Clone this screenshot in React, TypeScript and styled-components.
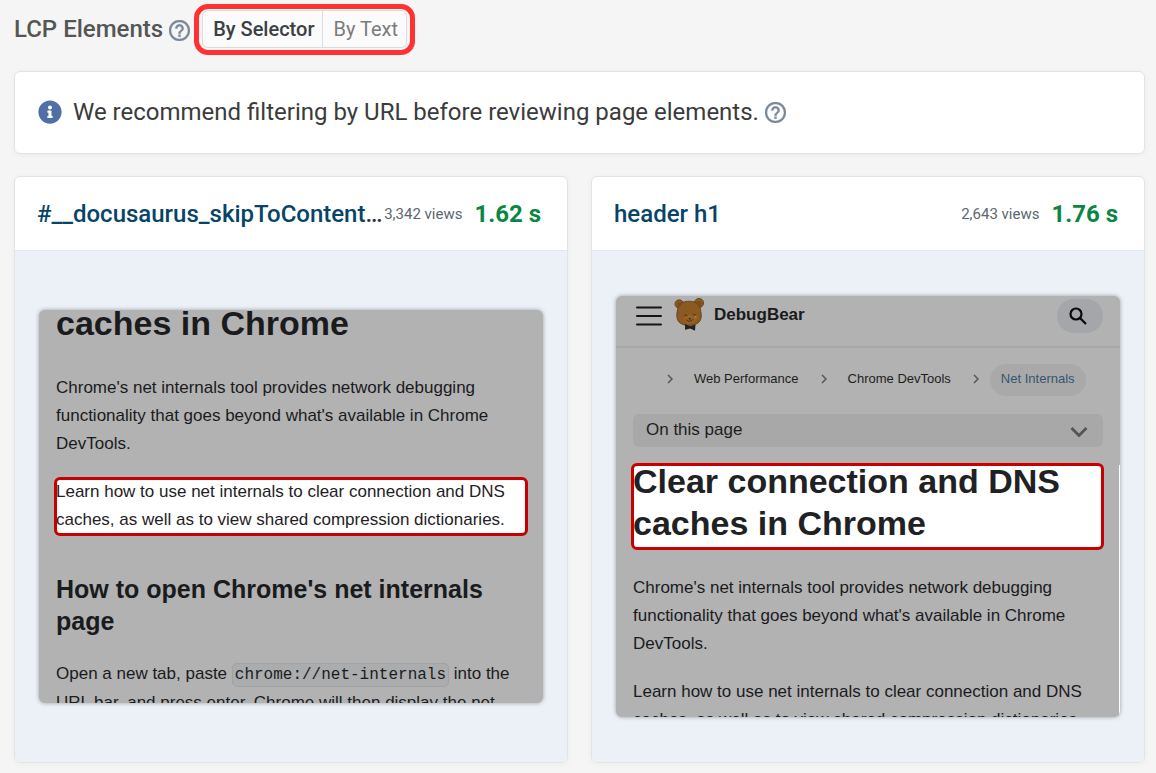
import React from "react";
import styled, { createGlobalStyle, css } from "styled-components";
import { FaInfoCircle } from "react-icons/fa";

const GlobalStyle = createGlobalStyle`
  *, *::before, *::after { box-sizing: border-box; }
  body {
    margin: 0;
    background: #f5f5f5;
    font-family: Roboto, "Liberation Sans", sans-serif;
    color: #3b3b3b;
  }
  h1, h2, h3, p { margin: 0; }
`;

const Page = styled.main`
  padding: 4px 11px 10px 14px;
`;

const TitleRow = styled.header`
  display: flex;
  align-items: center;
`;

const Title = styled.h1`
  padding-bottom: 2px;
  font-size: 24px;
  line-height: 32px;
  font-weight: 500;
  color: #555;
`;

const HelpButton = styled.button`
  display: flex;
  margin: 2px 0 0 6px;
  padding: 0;
  border: 0;
  background: none;
  color: #778899;
`;

const Callout = styled.div`
  margin-left: 4px;
  padding: 1px 3px 2px;
  border: 5px solid #ff3131;
  border-radius: 14px;
`;

const Toggle = styled.div`
  display: flex;
  height: 38px;
  border: 1px solid #dcdcdc;
  border-radius: 6px;
  background: #fbfbfb;
`;

const ToggleButton = styled.button<{ $active?: boolean }>`
  padding: 0 8px 0 10px;
  border: 0;
  background: none;
  font-family: inherit;
  font-size: 20px;
  font-weight: ${(p) => (p.$active ? 500 : 400)};
  color: ${(p) => (p.$active ? "#3b4045" : "#7b7b7b")};

  & + & {
    border-left: 1px solid #dcdcdc;
  }
`;

const panel = css`
  background: #fff;
  border: 1px solid #e2e3e4;
  border-radius: 6px;
  box-shadow: 0 1px 6px rgba(0, 0, 0, 0.04);
`;

const Banner = styled.section`
  ${panel}
  display: flex;
  align-items: center;
  margin-top: 16px;
  padding: 23px 23px 25px;
  font-size: 24px;
  line-height: 31px;

  & > svg {
    color: #4f6fa5;
    margin-right: 11px;
  }
  p {
    padding-top: 2px;
  }
`;

const Cards = styled.div`
  display: grid;
  grid-template-columns: 1fr 1fr;
  gap: 23px;
  margin-top: 22px;
`;

const Card = styled.article`
  ${panel}
  display: flex;
  flex-direction: column;
  min-width: 0;
  overflow: hidden;
`;

const CardHeader = styled.header`
  display: flex;
  align-items: center;
  height: 73px;
  padding: 0 26px 0 22px;
`;

const Selector = styled.h2`
  flex: 1;
  min-width: 0;
  white-space: nowrap;
  font-size: 24px;
  line-height: 32px;
  font-weight: 500;
  color: #333;

  a {
    color: #074468;
    text-decoration: none;
  }
`;

const Views = styled.span`
  font-size: 15px;
  color: #5b6770;
`;

const Timing = styled.strong`
  margin-left: 12px;
  font-size: 24px;
  font-weight: 700;
  color: #088742;
`;

const CardBody = styled.div`
  display: flex;
  align-items: center;
  flex: 1;
  min-height: 512px;
  padding: 44px 24px;
  border-top: 1px solid #e3e8ec;
  background: #ebf1f6;
`;

const Preview = styled.div<{ $height: number }>`
  flex: 1;
  min-width: 0;
  height: ${(p) => p.$height}px;
  overflow: hidden;
  border-radius: 6px;
  background: #b2b2b2;
  box-shadow: 0 0 4px rgba(0, 0, 0, 0.35);
  font-family: "Liberation Sans", Arial, sans-serif;
  color: #1a1b1d;
`;

const Doc = styled.div<{ $edge?: boolean; $scrolled?: boolean }>`
  display: flow-root;
  height: 100%;
  padding: 0 17px;
  ${(p) => p.$edge && "border-right: 1px solid #fff;"}
  ${(p) => p.$scrolled && "margin-top: -8px; height: auto;"}
`;

const DocTitle = styled.h1`
  margin-bottom: 30px;
  font-size: 34px;
  line-height: 42px;
`;

const DocHeading = styled.h2`
  margin: 39px 0 23px;
  font-size: 25px;
  line-height: 32px;
`;

const Paragraph = styled.p`
  margin-bottom: 20px;
  font-size: 17px;
  line-height: 28px;
`;

const Highlight = styled.div<{ $height: number }>`
  display: flow-root;
  height: ${(p) => p.$height}px;
  margin: 21px 0 26px;
  border-radius: 4px;
  outline: 3px solid #c80000;
  outline-offset: -1px;
  background: #fff;
  color: #1f2225;

  &:first-child {
    margin-top: 0;
  }
  ${DocTitle} {
    margin: -5px 0 0;
  }
  ${Paragraph} {
    margin: -1px 0 0;
  }
`;

const Code = styled.code`
  padding: 2px;
  border: 1px solid #a0a2a4;
  border-radius: 5px;
  background: #abacae;
  font-family: "Liberation Mono", monospace;
  font-size: 16px;
`;

const SiteBar = styled.div`
  display: flex;
  align-items: center;
  height: 52px;
  padding: 0 17px 10px 20px;
  border-bottom: 2px solid #a8a8a8;
`;

const IconButton = styled.button`
  display: flex;
  padding: 0;
  border: 0;
  background: none;
  color: #141517;
`;

const Brand = styled.a`
  display: flex;
  align-items: center;
  gap: 9px;
  margin: 0 0 3px 12px;
  color: #1a1b1d;
  font-size: 17px;
  font-weight: 700;
  text-decoration: none;
`;

const SearchButton = styled(IconButton)`
  align-items: center;
  justify-content: center;
  width: 46px;
  height: 34px;
  margin-left: auto;
  padding-right: 4px;
  border-radius: 17px;
  background: #a4a6aa;
`;

const Crumbs = styled.nav`
  display: flex;
  align-items: center;
  height: 32px;
  margin: 16px 0 18px 29px;
  font-size: 13px;
  line-height: 30px;
  white-space: nowrap;

  a {
    padding-bottom: 2px;
    color: #1d1e20;
    text-decoration: none;
  }
  svg {
    margin: 0 21px 2px 22px;
  }
  svg:last-of-type {
    margin-right: 11px;
  }
`;

const CurrentCrumb = styled.span`
  padding: 0 11px 2px;
  border-radius: 16px;
  background: #a9a9a9;
  color: #34566f;
`;

const Contents = styled.button`
  display: flex;
  align-items: center;
  justify-content: space-between;
  width: calc(100% - 34px);
  height: 33px;
  margin: 0 17px 18px;
  padding: 0 15px 1px 13px;
  border: 0;
  border-radius: 6px;
  background: #a8a8a8;
  color: #1d1e20;
  font-family: inherit;
  font-size: 17px;

  svg {
    margin-top: 3px;
  }
`;

const Chevron = () => (
  <svg width="6" height="10" viewBox="0 0 6 10" fill="none" stroke="#555" strokeWidth="1.5" aria-hidden="true">
    <path d="M1 1l4 4-4 4" />
  </svg>
);

const Bear = () => (
  <svg width="31" height="33" viewBox="0 0 31 33" aria-hidden="true">
    <g fill="#8b5a20" stroke="#5a3a18" strokeWidth="0.8">
      <circle cx="5.200" cy="6" r="4.200" />
      <circle cx="25" cy="5" r="4.600" />
      <path d="M15 3.200C8 3.200 4.500 6.500 3.600 11.500 3.200 14 2.600 15.500 2.800 18.500 3.200 24.500 8 27.500 15 27.500s12-3 12.300-9c.2-3-.6-4.500-.8-7C26 6.500 22 3.200 15 3.200z" />
    </g>
    <circle cx="5.400" cy="6.200" r="2" fill="#7a4b1c" />
    <circle cx="25.200" cy="5.200" r="2.200" fill="#7a4b1c" />
    <ellipse cx="16" cy="21" rx="6.500" ry="4.500" fill="#966226" />
    <path d="M10.500 17.600c.9-.7 2-.7 2.700 0M19 17c.9-.7 2-.7 2.700 0M12.500 22c1.800 1.800 5 1.700 6.500-.4" fill="none" stroke="#4a2d14" strokeWidth="1" strokeLinecap="round" />
    <path d="M14.200 20.300h3.400l-1.700 1.700z" fill="#3d2613" />
    <circle cx="21.800" cy="19" r="1" fill="#b27a61" />
    <path d="M11 26l5 2.200 5.500-1.700-.5 6.300-4.800-2.300L11 31.800z" fill="#222" />
  </svg>
);

const Help = ({ label }: { label: string }) => (
  <HelpButton type="button" aria-label={label}>
    <svg width="21" height="21" viewBox="2 2 20 20" fill="currentColor" stroke="currentColor" strokeWidth="0.3" aria-hidden="true">
      <path d="M11 18h2v-2h-2v2zm1-16C6.480 2 2 6.480 2 12s4.480 10 10 10 10-4.480 10-10S17.520 2 12 2zm0 18c-4.410 0-8-3.590-8-8s3.590-8 8-8 8 3.590 8 8-3.590 8-8 8zm0-14c-2.210 0-4 1.790-4 4h2c0-1.100.9-2 2-2s2 .9 2 2c0 2-3 1.750-3 5h2c0-2.250 3-2.500 3-5 0-2.210-1.790-4-4-4z" />
    </svg>
  </HelpButton>
);

const Intro = () => (
  <Paragraph>
    Chrome's net internals tool provides network debugging functionality that goes beyond what's available in Chrome
    DevTools.
  </Paragraph>
);

const Learn = () => (
  <Paragraph>
    Learn how to use net internals to clear connection and DNS caches, as well as to view shared compression
    dictionaries.
  </Paragraph>
);

interface ElementCardProps {
  selector: string;
  truncated?: boolean;
  views: string;
  time: string;
  children: React.ReactNode;
}

const ElementCard = ({ selector, truncated, views, time, children }: ElementCardProps) => (
  <Card>
    <CardHeader>
      <Selector>
        <a href="#element">{selector}</a>
        {truncated && "…"}
      </Selector>
      <Views>{views} views</Views>
      <Timing>{time}</Timing>
    </CardHeader>
    <CardBody>{children}</CardBody>
  </Card>
);

export default function App() {
  const [mode, setMode] = React.useState("selector");
  return (
    <Page>
      <GlobalStyle />
      <TitleRow>
        <Title>LCP Elements</Title>
        <Help label="About LCP elements" />
        <Callout>
          <Toggle>
            <ToggleButton type="button" $active={mode === "selector"} onClick={() => setMode("selector")}>
              By Selector
            </ToggleButton>
            <ToggleButton type="button" $active={mode === "text"} onClick={() => setMode("text")}>
              By Text
            </ToggleButton>
          </Toggle>
        </Callout>
      </TitleRow>

      <Banner>
        <FaInfoCircle />
        <p>We recommend filtering by URL before reviewing page elements.</p>
        <Help label="About filtering" />
      </Banner>

      <Cards>
        <ElementCard selector="#__docusaurus_skipToContent" truncated views="3,342" time="1.62 s">
          <Preview $height={393}>
            <Doc $scrolled>
              <DocTitle>caches in Chrome</DocTitle>
              <Intro />
              <Highlight $height={55}>
                <Learn />
              </Highlight>
              <DocHeading>How to open Chrome's net internals page</DocHeading>
              <Paragraph>
                Open a new tab, paste <Code>chrome://net-internals</Code> into the URL bar, and press enter. Chrome will
                then display the net
              </Paragraph>
            </Doc>
          </Preview>
        </ElementCard>

        <ElementCard selector="header h1" views="2,643" time="1.76 s">
          <Preview $height={421}>
            <SiteBar>
              <IconButton type="button" aria-label="Menu">
                <svg width="26" height="20" viewBox="0 0 26 20" stroke="#141517" strokeWidth="2" strokeLinecap="round">
                  <path d="M1 1.500h24M1 10h24M1 18.500h24" />
                </svg>
              </IconButton>
              <Brand href="#home">
                <Bear />
                DebugBear
              </Brand>
              <SearchButton type="button" aria-label="Search">
                <svg width="18" height="18" viewBox="0 0 18 18" fill="none" stroke="#08090a" strokeWidth="2.200">
                  <circle cx="7" cy="7" r="5.500" />
                  <path d="M11 11l6 6" />
                </svg>
              </SearchButton>
            </SiteBar>
            <Crumbs aria-label="Breadcrumb">
              <Chevron />
              <a href="#performance">Web Performance</a>
              <Chevron />
              <a href="#devtools">Chrome DevTools</a>
              <Chevron />
              <CurrentCrumb>Net Internals</CurrentCrumb>
            </Crumbs>
            <Contents type="button">
              On this page
              <svg width="18" height="12" viewBox="0 0 18 12" fill="none" stroke="#555" strokeWidth="2.800">
                <path d="M1.500 2L9 9.500 16.500 2" />
              </svg>
            </Contents>
            <Doc $edge>
              <Highlight $height={83}>
                <DocTitle>Clear connection and DNS caches in Chrome</DocTitle>
              </Highlight>
              <Intro />
              <Learn />
            </Doc>
          </Preview>
        </ElementCard>
      </Cards>
    </Page>
  );
}
